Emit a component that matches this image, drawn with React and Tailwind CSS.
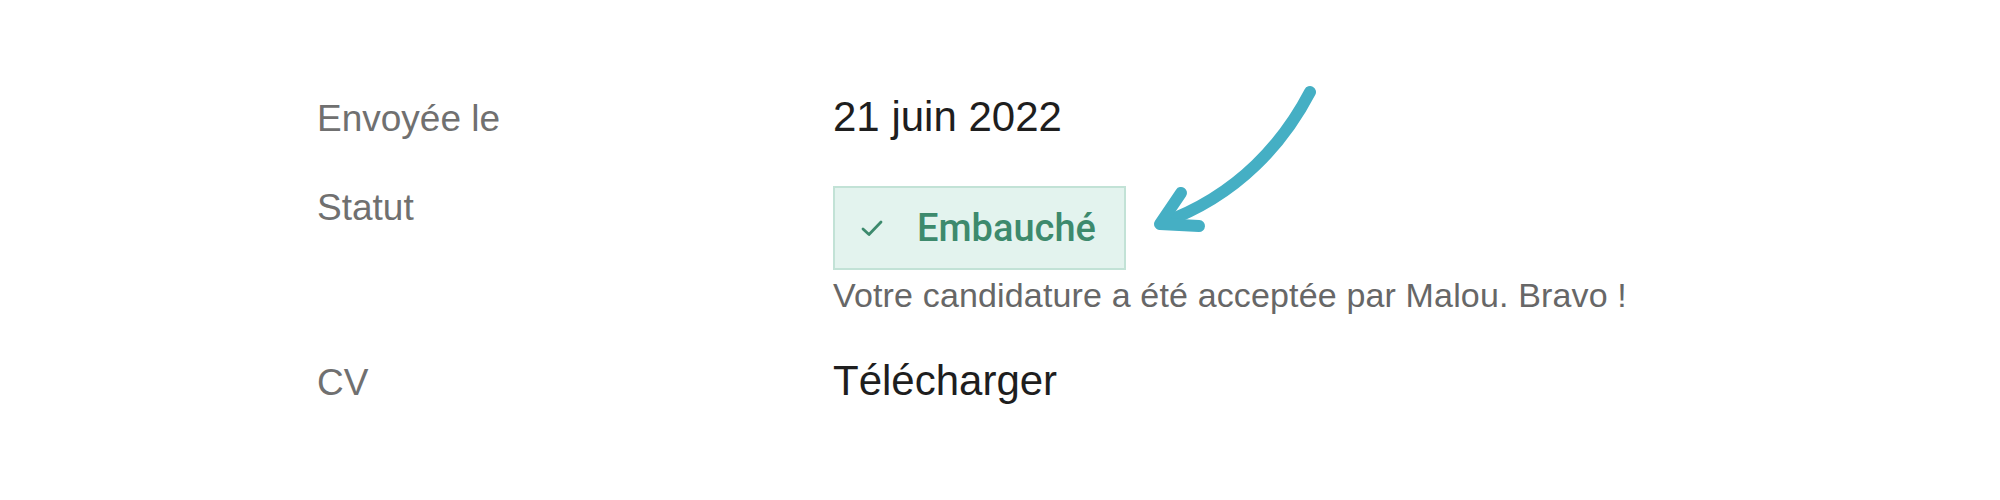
import React from 'react';

const Arrow = () => (
  <svg
    className="absolute left-0 top-0 pointer-events-none"
    width="2000"
    height="500"
    viewBox="0 0 2000 500"
    fill="none"
  >
    <g stroke="#45afc4" strokeWidth="12" strokeLinecap="round" strokeLinejoin="round">
      <path d="M1310 92 C1285 140 1240 195 1162 223" />
      <path d="M1181 193 L1160 224 L1199 226" />
    </g>
  </svg>
);

const App = () => {
  return (
    <div className="relative w-[2000px] h-[500px] bg-white overflow-hidden" style={{ fontFamily: '"Liberation Sans", Arial, sans-serif' }}>
      <div className="pl-[317px] pt-[92px]">
        {/* Envoyée le */}
        <div className="flex items-baseline">
          <div className="w-[516px] text-[37px] leading-[44px] text-[#707070]">Envoyée le</div>
          <div className="text-[42px] leading-[50px] text-[#1e1e1e]">21 juin 2022</div>
        </div>

        {/* Statut */}
        <div className="flex items-start mt-[44px]">
          <div className="w-[516px] text-[37px] leading-[44px] text-[#707070]">Statut</div>
          <div className="flex flex-col">
            <div className="flex items-center w-[293px] h-[84px] pl-[26px] bg-[#e3f3ee] border-2 border-[#c2e2d6]">
              <svg width="22" height="17" viewBox="0 0 22 17" fill="none">
                <path d="M2 9 L8 14.5 L20 2" stroke="#3d8a6d" strokeWidth="2.8" strokeLinecap="round" strokeLinejoin="round" />
              </svg>
              <span className="ml-[34px] font-['Roboto',sans-serif] font-medium text-[38px] leading-[44px] text-[#3d8a6d]">Embauché</span>
            </div>
            <div className="mt-[5px] text-[34px] leading-[40px] tracking-[0.15px] text-[#676767] whitespace-nowrap">
              Votre candidature a été acceptée par Malou. Bravo !
            </div>
          </div>
        </div>

        {/* CV */}
        <div className="flex items-baseline mt-[41px]">
          <div className="w-[516px] text-[37px] leading-[44px] text-[#707070]">CV</div>
          <div className="text-[42px] leading-[50px] text-[#1e1e1e]">Télécharger</div>
        </div>
      </div>

      <Arrow />
    </div>
  );
};

export default App;
